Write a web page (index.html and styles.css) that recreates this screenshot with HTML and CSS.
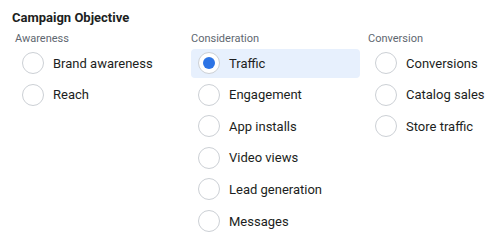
FILE: index.html
```html
<!DOCTYPE html>
<html>
<head>
    <title>Campaign Objective</title>
    <link rel="stylesheet" href="styles.css">
</head>
<body>

<!-- Objective picker -->
<div class="objective">
    <h2 class="objective-title">Campaign Objective</h2>

    <div class="objective-groups">
        <div class="group">
            <div class="group-label">Awareness</div>
            <label class="option"><span class="radio"></span>Brand awareness</label>
            <label class="option"><span class="radio"></span>Reach</label>
        </div>

        <div class="group">
            <div class="group-label">Consideration</div>
            <label class="option selected"><span class="radio"></span>Traffic</label>
            <label class="option"><span class="radio"></span>Engagement</label>
            <label class="option"><span class="radio"></span>App installs</label>
            <label class="option"><span class="radio"></span>Video views</label>
            <label class="option"><span class="radio"></span>Lead generation</label>
            <label class="option"><span class="radio"></span>Messages</label>
        </div>

        <div class="group">
            <div class="group-label">Conversion</div>
            <label class="option"><span class="radio"></span>Conversions</label>
            <label class="option"><span class="radio"></span>Catalog sales</label>
            <label class="option"><span class="radio"></span>Store traffic</label>
        </div>
    </div>
</div>

</body>
</html>
```

FILE: styles.css
```css
body {
    margin: 0;
    background: #fff;
    font-family: Roboto, "Liberation Sans", Arial, sans-serif;
    color: #1c1e21;
}

.objective {
    padding: 9px 0 0 12px;
}

.objective-title {
    margin: 0;
    font-size: 13px;
    font-weight: bold;
    line-height: 17px;
    color: #1c1e21;
}

.objective-groups {
    display: grid;
    grid-template-columns: 176px 177px minmax(0, 1fr);
    margin-left: 3px;
    margin-top: 6px;
}

.group {
    display: flex;
    flex-direction: column;
    gap: 2.6px;
    min-width: 0;
}

.group-label {
    font-size: 11px;
    line-height: 14px;
    color: #606770;
}

.option {
    display: flex;
    align-items: center;
    gap: 9px;
    width: 169px;
    max-width: 100%;
    height: 29px;
    padding-left: 7px;
    box-sizing: border-box;
    border-radius: 4px;
    font-size: 13px;
    color: #1c1e21;
    white-space: nowrap;
    cursor: pointer;
}

.radio {
    width: 22px;
    height: 22px;
    box-sizing: border-box;
    border: 1px solid #ccd0d5;
    border-radius: 50%;
    background: #fff;
    display: flex;
    align-items: center;
    justify-content: center;
    flex-shrink: 0;
}

.option.selected {
    background: #e7f0fd;
}

.option.selected .radio::after {
    content: "";
    width: 12px;
    height: 12px;
    border-radius: 50%;
    background: #2d74e5;
}
```
